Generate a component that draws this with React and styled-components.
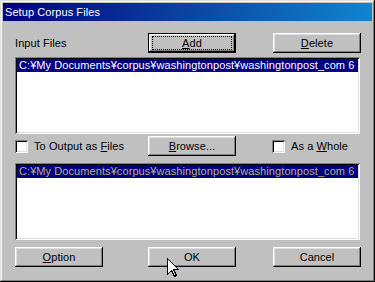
import React from "react";
import styled, { createGlobalStyle } from "styled-components";

const Global = createGlobalStyle`
  html, body { margin: 0; padding: 0; background: #c0c0c0; }
  body {
    font-family: "Liberation Sans", Arial, sans-serif;
    font-size: 11px;
    letter-spacing: 0.08px;
  }
  * { box-sizing: border-box; }
`;

const Window = styled.div`
  position: relative;
  width: 375px;
  height: 282px;
  padding: 3px;
  background: #c0c0c0;
  box-shadow: inset -1px -1px #000, inset 1px 1px #dfdfdf,
    inset -2px -2px #808080, inset 2px 2px #fff;
  display: flex;
  flex-direction: column;
`;

const TitleBar = styled.div`
  height: 18px;
  background: linear-gradient(90deg, #000080 0%, #0a3d9e 45%, #1084d0 100%);
  color: #fff;
  display: flex;
  align-items: center;
  padding-left: 2px;
  font-size: 11px;
`;

const Body = styled.div`
  display: flex;
  flex-direction: column;
  padding: 12px 11px 0 12px;
`;

const Row = styled.div`
  display: flex;
  align-items: center;
  height: 20px;
  margin-top: ${(p) => p.$top || 0}px;
`;

const Label = styled.div`
  width: ${(p) => p.$w}px;
  color: #000;
  white-space: nowrap;
`;

const Button = styled.div`
  width: 88px;
  height: 20px;
  margin-left: ${(p) => p.$ml || 0}px;
  display: flex;
  align-items: center;
  justify-content: center;
  color: #000;
  background: #c0c0c0;
  box-shadow: ${(p) =>
    p.$default
      ? "inset -1px -1px #000, inset 1px 1px #000, inset -2px -2px #000, inset 2px 2px #fff, inset -3px -3px #808080, inset 3px 3px #dfdfdf"
      : "inset -1px -1px #000, inset 1px 1px #fff, inset -2px -2px #808080, inset 2px 2px #dfdfdf"};
  padding-bottom: 1px;
`;

const Focus = styled.span`
  display: flex;
  align-items: center;
  justify-content: center;
  width: 78px;
  height: 12px;
  outline: 1px dotted #000;
`;

const U = styled.span`
  text-decoration: underline;
  text-underline-offset: 1px;
`;

const ListBox = styled.div`
  width: 345px;
  height: 77px;
  background: #fff;
  padding: 2px;
  margin-top: ${(p) => p.$top}px;
  box-shadow: inset 1px 1px #808080, inset -1px -1px #fff,
    inset 2px 2px #000, inset -2px -2px #dfdfdf;
`;

const Item = styled.div`
  height: 13px;
  line-height: 13px;
  background: #000080;
  color: ${(p) => (p.$dim ? "#b8b07c" : "#fff")};
  padding-left: 2px;
  white-space: nowrap;
  overflow: hidden;
`;

const CheckWrap = styled.label`
  display: flex;
  align-items: center;
  gap: 6px;
  width: ${(p) => p.$w || "auto"};
  margin-left: ${(p) => p.$ml || 0}px;
  color: #000;
  white-space: nowrap;
`;

const Box = styled.span`
  width: 13px;
  height: 13px;
  background: #fff;
  box-shadow: inset 1px 1px #808080, inset -1px -1px #fff,
    inset 2px 2px #000, inset -2px -2px #dfdfdf;
`;

const Cursor = styled.svg`
  position: absolute;
  left: 167px;
  top: 258px;
`;

export default function App() {
  const path = "C:¥My Documents¥corpus¥washingtonpost¥washingtonpost_com 6";
  return (
    <>
      <Global />
      <Window>
        <TitleBar>Setup Corpus Files</TitleBar>
        <Body>
          <Row>
            <Label $w={133}>Input Files</Label>
            <Button $default>
              <Focus>
                <U>A</U>dd
              </Focus>
            </Button>
            <Button $ml={37}>
              <U>D</U>elete
            </Button>
          </Row>
          <ListBox $top={4}>
            <Item>{path}</Item>
          </ListBox>
          <Row $top={2}>
            <CheckWrap $w="133px">
              <Box />
              <span>
                To Output as <U>F</U>iles
              </span>
            </CheckWrap>
            <Button>
              <U>B</U>rowse...
            </Button>
            <CheckWrap $ml={36}>
              <Box />
              <span>
                As a <U>W</U>hole
              </span>
            </CheckWrap>
          </Row>
          <ListBox $top={7}>
            <Item $dim>{path}</Item>
          </ListBox>
          <Row $top={7}>
            <Button>
              <U>O</U>ption
            </Button>
            <Button $ml={45}>OK</Button>
            <Button $ml={37}>Cancel</Button>
          </Row>
        </Body>
        <Cursor width="12" height="20" viewBox="0 0 12 20">
          <path
            d="M0.5 0.5 L0.5 16.5 L4.5 12.5 L7.5 18.5 L9.5 17.5 L6.5 11.5 L11.5 11.5 Z"
            fill="#fff"
            stroke="#000"
            strokeWidth="1"
            shapeRendering="crispEdges"
          />
        </Cursor>
      </Window>
    </>
  );
}
